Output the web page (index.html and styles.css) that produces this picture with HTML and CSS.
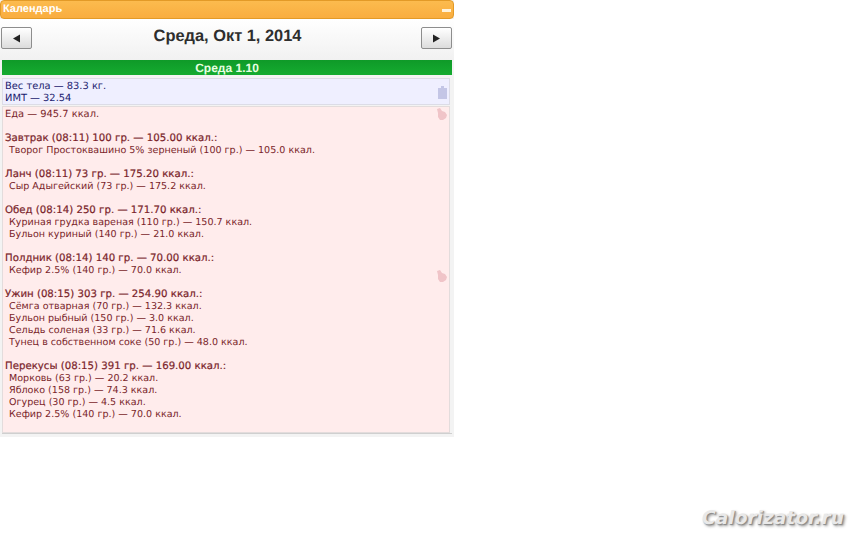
FILE: index.html
```html
<!DOCTYPE html>
<html lang="ru">
<head>
<meta charset="utf-8">
<title>Календарь</title>
<link rel="stylesheet" href="styles.css">
</head>
<body>
<div class="widget">
  <div class="titlebar"><span class="title">Календарь</span><span class="minimize"></span></div>
  <div class="nav">
    <button class="navbtn"><svg width="9" height="9" viewBox="0 0 9 9"><path d="M1 4.5 8 0.5V8.500Z"/></svg></button>
    <div class="date">Среда, Окт 1, 2014</div>
    <button class="navbtn"><svg width="9" height="9" viewBox="0 0 9 9"><path d="M8 4.5 1 0.5V8.500Z"/></svg></button>
  </div>
  <div class="day">
    <div class="dayhead">Среда 1.10</div>
    <div class="box weight">
      <svg class="ico" width="9" height="13" viewBox="0 0 9 13"><path d="M3 0h3v2h3v11H0V2h3z" fill="#c4c6e6"/></svg>
      <div>Вес тела — 83.3 кг.</div>
      <div>ИМТ — 32.54</div>
    </div>
    <div class="box food">
      <svg class="ico" width="11" height="12" viewBox="0 0 11 12"><path d="M1 1 4 0l2 3 3 1 2 3-1 3-3 2H4L2 9V5z" fill="#f0c4c8"/></svg>
      <svg class="ico ico2" width="11" height="12" viewBox="0 0 11 12"><path d="M1 1 4 0l2 3 3 1 2 3-1 3-3 2H4L2 9V5z" fill="#f0c4c8"/></svg>
      <div class="total">Еда — 945.7 ккал.</div>
      <section class="meal">
        <div class="head">Завтрак (08:11) 100 гр. — 105.00 ккал.:</div>
        <div class="item">Творог Простоквашино 5% зерненый (100 гр.) — 105.0 ккал.</div>
      </section>
      <section class="meal">
        <div class="head">Ланч (08:11) 73 гр. — 175.20 ккал.:</div>
        <div class="item">Сыр Адыгейский (73 гр.) — 175.2 ккал.</div>
      </section>
      <section class="meal">
        <div class="head">Обед (08:14) 250 гр. — 171.70 ккал.:</div>
        <div class="item">Куриная грудка вареная (110 гр.) — 150.7 ккал.</div>
        <div class="item">Бульон куриный (140 гр.) — 21.0 ккал.</div>
      </section>
      <section class="meal">
        <div class="head">Полдник (08:14) 140 гр. — 70.00 ккал.:</div>
        <div class="item">Кефир 2.5% (140 гр.) — 70.0 ккал.</div>
      </section>
      <section class="meal">
        <div class="head">Ужин (08:15) 303 гр. — 254.90 ккал.:</div>
        <div class="item">Сёмга отварная (70 гр.) — 132.3 ккал.</div>
        <div class="item">Бульон рыбный (150 гр.) — 3.0 ккал.</div>
        <div class="item">Сельдь соленая (33 гр.) — 71.6 ккал.</div>
        <div class="item">Тунец в собственном соке (50 гр.) — 48.0 ккал.</div>
      </section>
      <section class="meal">
        <div class="head">Перекусы (08:15) 391 гр. — 169.00 ккал.:</div>
        <div class="item">Морковь (63 гр.) — 20.2 ккал.</div>
        <div class="item">Яблоко (158 гр.) — 74.3 ккал.</div>
        <div class="item">Огурец (30 гр.) — 4.5 ккал.</div>
        <div class="item">Кефир 2.5% (140 гр.) — 70.0 ккал.</div>
      </section>
    </div>
  </div>
</div>
<div class="watermark">Calorizator.ru</div>
</body>
</html>
```

FILE: styles.css
```css
html, body {
  margin: 0;
  height: 540px;
  overflow: hidden;
  background: #fff;
}
body {
  position: relative;
  font-family: "DejaVu Sans", sans-serif;
  font-size: 9.9px;
  line-height: 12px;
  text-rendering: geometricPrecision;
}
.widget {
  width: 454px;
  height: 437px;
  background: #f3f3f3;
  display: flex;
  flex-direction: column;
}
.titlebar {
  height: 19px;
  box-sizing: border-box;
  background: linear-gradient(#fcbb4e, #f9ad3f);
  border: 1px solid #e39a27;
  border-radius: 4px;
  display: flex;
  align-items: flex-start;
  justify-content: space-between;
  padding: 2px 2px 0 2px;
}
.title {
  color: #fff;
  font-family: "Liberation Sans", sans-serif;
  font-weight: bold;
  font-size: 11px;
  line-height: 12px;
}
.minimize {
  width: 9px;
  height: 3px;
  background: #fff3dc;
  margin: 6px 0 0;
}
.nav {
  height: 41px;
  box-sizing: border-box;
  padding: 8px 2px 0 1px;
  display: flex;
  justify-content: space-between;
  align-items: flex-start;
  background: linear-gradient(#fff, #f1f1f1);
}
.navbtn {
  width: 31px;
  height: 22px;
  padding: 0;
  border: 1px solid #8d8d8d;
  border-radius: 2px;
  background: linear-gradient(#fff, #dcdcdc);
  display: flex;
  align-items: center;
  justify-content: center;
}
.navbtn path { fill: #222; }
.date {
  font-family: "Liberation Sans", sans-serif;
  font-weight: bold;
  font-size: 16.4px;
  line-height: 18px;
  margin-left: 2px;
  color: #2e2e2e;
}
.day {
  margin: 0 2px 0 2px;
  border-bottom: 1px solid #cfcfcf;
}
.dayhead {
  height: 15px;
  background: linear-gradient(#0f9a28, #15ab30);
  color: #e6ffe0;
  font-family: "Liberation Sans", sans-serif;
  font-weight: bold;
  font-size: 12px;
  line-height: 17px;
  text-align: center;
}
.box {
  position: relative;
  margin-right: 2px;
  border: 1px solid #dcdce6;
  padding: 0 2px;
}
.weight {
  margin-top: 3px;
  height: 27px;
  box-sizing: border-box;
  padding-top: 2px;
  background: #efefff;
  color: #1a1a6e;
}
.food {
  margin-top: 1px;
  height: 327px;
  box-sizing: border-box;
  padding-top: 2px;
  background: #ffecec;
  color: #7a1f2a;
  border-color: #e3dcdc;
}
.ico { position: absolute; right: 2px; top: 7px; }
.food .ico { top: 1px; }
.food .ico2 { top: 163px; }
.meal { margin-top: 12px; }
.head { font-size: 10.2px; -webkit-text-stroke: 0.2px #7a1f2a; }
.item { padding-left: 4px; font-size: 9.55px; }
.watermark {
  position: absolute;
  right: 20px;
  top: 510px;
  color: #e9e9e9;
  font-family: "DejaVu Sans", sans-serif;
  font-style: italic;
  font-weight: bold;
  font-size: 18.6px;
  line-height: 18px;
  text-shadow: 1px 1px 1px #888, 2px 2px 3px #999;
}
```
